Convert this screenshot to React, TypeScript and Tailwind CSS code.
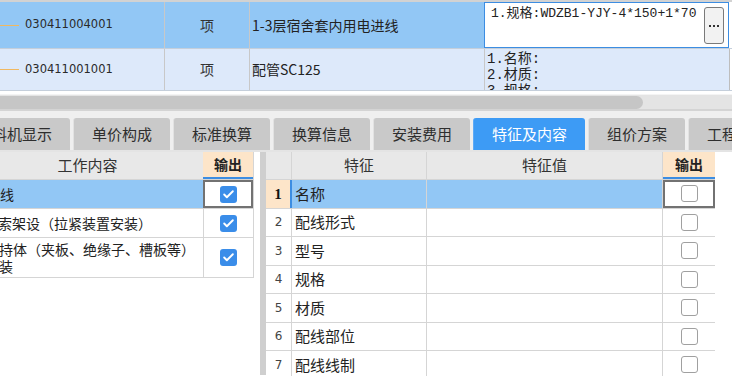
import { Check } from "lucide-react";

const cjk = "font-['Noto_Sans_CJK_SC',sans-serif]";
const mono = "font-['Liberation_Mono','Noto_Sans_CJK_SC',monospace]";

const tabs = [
  { label: "工料机显示", w: "w-[112px]" },
  { label: "单价构成", w: "w-[97px]" },
  { label: "标准换算", w: "w-[97px]" },
  { label: "换算信息", w: "w-[97px]" },
  { label: "安装费用", w: "w-[97px]" },
  { label: "特征及内容", w: "w-[112px]", active: true },
  { label: "组价方案", w: "w-[97px]" },
  { label: "工程量明细", w: "w-[112px]" },
];

const features = ["名称", "配线形式", "型号", "规格", "材质", "配线部位", "配线线制"];

const CheckedBox = () => (
  <div className="flex h-[17px] w-[17px] items-center justify-center rounded-[3px] bg-[#3a8de9]">
    <Check className="h-[13px] w-[13px] text-white" strokeWidth={3.5} />
  </div>
);

const EmptyBox = () => (
  <div className="h-[17px] w-[17px] rounded-[3px] border border-[#a0a0a0] bg-white" />
);

const TopRow = ({
  code,
  name,
  selected,
  children,
}: {
  code: string;
  name: string;
  selected?: boolean;
  children: React.ReactNode;
}) => (
  <div
    className={`flex border-b border-[#c5cfdb] ${
      selected ? "h-[47px] bg-[#92c7f5]" : "h-[42px] bg-[#dde9fa]"
    }`}
  >
    <div className="flex w-[165px] items-center border-r border-[#c8c8c8]">
      <span className="h-px w-[19px] bg-[#f0b860]" />
      <span className="ml-[6px] font-['DejaVu_Sans',sans-serif] text-[11.5px] text-[#2a2a2a]">
        {code}
      </span>
    </div>
    <div className={`flex w-[85px] items-center justify-center border-r border-[#c8c8c8] text-[14px] text-[#333] ${cjk}`}>
      项
    </div>
    <div className={`flex w-[234px] items-center pl-[2px] text-[14px] text-[#222] ${cjk}`}>
      {name}
    </div>
    {children}
  </div>
);

export default function App() {
  return (
    <div className={`h-[376px] w-[732px] overflow-hidden bg-white ${cjk}`}>
      {/* top grid */}
      <div className="h-[2px] bg-[#d2d2d2]" />
      <TopRow code="030411004001" name="1-3层宿舍套内用电进线" selected>
        <div className="flex w-[245px] border border-[#3c8de2] bg-white">
          <div className={`flex-1 pl-[6px] pt-[2px] text-[13px] leading-[18px] text-[#222] ${mono}`}>
            1.规格:WDZB1-YJY-4*150+1*70
          </div>
          <div className="mr-[4px] mt-[4px] flex h-[37px] w-[20px] items-center justify-center rounded-[3px] border border-[#7a7a7a] bg-[#f2f2f2]">
            <svg width="12" height="4" viewBox="0 0 12 4">
              <rect x="1" y="1" width="2" height="2" fill="#333" />
              <rect x="5" y="1" width="2" height="2" fill="#333" />
              <rect x="9" y="1" width="2" height="2" fill="#333" />
            </svg>
          </div>
        </div>
        <div className="w-[3px] bg-white" />
      </TopRow>
      <TopRow code="030411001001" name="配管SC125">
        <div className={`w-[245px] overflow-hidden border-l border-[#c8c8c8] pl-[2px] pt-[2px] text-[14px] leading-[16px] text-[#222] ${mono}`}>
          <div>1.名称:</div>
          <div>2.材质:</div>
          <div>3.规格:</div>
        </div>
        <div className="w-[3px] border-l border-[#bdbdbd] bg-white" />
      </TopRow>
      <div className="h-[3px] bg-white" />

      {/* horizontal scrollbar */}
      <div className="h-[15px] border-t border-[#f4f4f4] bg-[#e4e4e4] pt-px">
        <div className="h-[13px] w-[643px] rounded-r-full bg-[#c6c6c6]" />
      </div>
      <div className="h-[2px] bg-[#d4d4d4]" />

      {/* tab strip */}
      <div className="h-[39px] overflow-hidden bg-[#efefef] pt-[7px]">
        <div className="-ml-[42px] flex h-[32px] gap-[3px]">
          {tabs.map((t) => (
            <div
              key={t.label}
              className={`flex h-[32px] shrink-0 items-center justify-center rounded-t-[3px] border-l text-[15px] ${t.w} ${
                t.active
                  ? "border-[#5eaaf6] bg-[#3d9bf5] text-white"
                  : "border-[#e2e2e2] bg-[#c9c9c9] text-[#2e2e2e]"
              }`}
            >
              {t.label}
            </div>
          ))}
        </div>
      </div>
      <div className="h-[2px] bg-[#e4e4e4]" />

      {/* bottom panels */}
      <div className="flex">
        {/* work content */}
        <div className="w-[254px] self-start overflow-hidden border-r border-[#d5d5d5]">
          <div className="-ml-[28px] w-[282px] text-[14px] text-[#222]">
            <div className="flex h-[28px] border-b border-[#d5d5d5]">
              <div className="flex w-[231px] items-center justify-center bg-[#e8e8e8] text-[15px] text-[#333]">
                工作内容
              </div>
              <div className="flex w-[50px] items-center justify-center border-b-2 border-[#3c8de2] bg-[#fde5c9] font-bold text-[#222]">
                输出
              </div>
            </div>
            <div className="flex h-[29px] border-b border-[#d5d5d5]">
              <div className="flex w-[231px] items-center bg-[#92c7f5] pl-[14px]">配线</div>
              <div className="flex w-[50px] items-center justify-center border-2 border-[#727272] bg-white">
                <CheckedBox />
              </div>
            </div>
            <div className="flex h-[29px] border-b border-[#d5d5d5]">
              <div className="flex w-[231px] items-center whitespace-nowrap pl-[12px]">
                钢索架设（拉紧装置安装）
              </div>
              <div className="flex w-[50px] items-center justify-center border-l border-[#d5d5d5]">
                <CheckedBox />
              </div>
            </div>
            <div className="flex h-[40px] border-b border-[#d5d5d5]">
              <div className="flex w-[231px] items-center pl-[13px] pr-[2px] leading-[17px]">
                支持体（夹板、绝缘子、槽板等）安装
              </div>
              <div className="flex w-[50px] items-center justify-center border-l border-[#d5d5d5]">
                <CheckedBox />
              </div>
            </div>
          </div>
        </div>

        <div className="w-[6px]" />
        <div className="h-[223px] w-[6px] bg-[#cfcfcf]" />

        {/* features table */}
        <div className="w-[449px] text-[15px] text-[#222]">
          <div className="flex h-[28px] border-b border-[#d5d5d5] bg-[#e8e8e8] text-[#333]">
            <div className="w-[26px] border-r border-[#d5d5d5]" />
            <div className="flex w-[135px] items-center justify-center border-r border-[#d5d5d5]">特征</div>
            <div className="flex w-[236px] items-center justify-center border-r border-[#d5d5d5]">特征值</div>
            <div className="flex w-[52px] items-center justify-center border-b-2 border-[#3c8de2] bg-[#fde5c9] text-[14px] font-bold text-[#222]">
              输出
            </div>
          </div>
          {features.map((f, i) => {
            const sel = i === 0;
            return (
              <div key={f} className="flex h-[28.5px] border-b border-[#d5d5d5]">
                <div
                  className={`flex w-[26px] items-center justify-center border-r ${
                    sel
                      ? "border-r-2 border-[#3c8de2] bg-[#fde5c9] font-['Liberation_Serif',serif] text-[15px] font-bold text-[#111]"
                      : "border-[#d5d5d5] font-['DejaVu_Sans',sans-serif] text-[12px] text-[#444]"
                  }`}
                >
                  {i + 1}
                </div>
                <div
                  className={`flex w-[135px] items-center border-r border-[#d5d5d5] pl-[3px] ${
                    sel ? "bg-[#92c7f5]" : ""
                  }`}
                >
                  {f}
                </div>
                <div className={`w-[236px] border-r border-[#d5d5d5] ${sel ? "bg-[#92c7f5]" : ""}`} />
                <div
                  className={`flex w-[52px] items-center justify-center ${
                    sel ? "border-2 border-[#727272]" : ""
                  }`}
                >
                  <EmptyBox />
                </div>
              </div>
            );
          })}
        </div>
      </div>
    </div>
  );
}
